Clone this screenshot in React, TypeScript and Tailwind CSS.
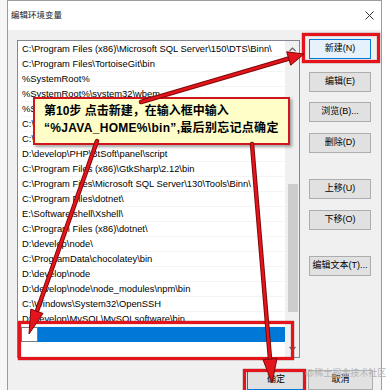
const rows = [
  "C:\\Program Files (x86)\\Microsoft SQL Server\\150\\DTS\\Binn\\",
  "C:\\Program Files\\TortoiseGit\\bin",
  "%SystemRoot%",
  "%SystemRoot%\\system32\\wbem",
  "%SystemRoot%\\System32\\WindowsPowerShell\\v1.0\\",
  "C:\\Program Files\\Git\\cmd",
  "C:\\Program Files\\nodejs\\",
  "D:\\develop\\PHP\\BtSoft\\panel\\script",
  "C:\\Program Files (x86)\\GtkSharp\\2.12\\bin",
  "C:\\Program Files\\Microsoft SQL Server\\130\\Tools\\Binn\\",
  "C:\\Program Files\\dotnet\\",
  "E:\\Software\\shell\\Xshell\\",
  "C:\\Program Files (x86)\\dotnet\\",
  "D:\\develop\\node\\",
  "C:\\ProgramData\\chocolatey\\bin",
  "D:\\develop\\node",
  "D:\\develop\\node\\node_modules\\npm\\bin",
  "C:\\Windows\\System32\\OpenSSH",
  "D:\\develop\\MySQL\\MySQLsoftware\\bin",
];

function SideButton({ label, focused, className }: { label: string; focused?: boolean; className: string }) {
  return (
    <div
      className={`flex h-[20px] w-[62px] items-center justify-center border text-[9px] ${
        focused ? "border-[#0078d7] bg-[#e5f1fb]" : "border-[#adadad] bg-[#e1e1e1]"
      } ${className}`}
    >
      {label}
    </div>
  );
}

function Arrows() {
  return (
    <svg className="pointer-events-none absolute left-0 top-0" width="387" height="390" viewBox="0 0 387 390">
      <g stroke="#7d0808" strokeWidth="4.5" strokeLinecap="round" fill="none">
        <line x1="141" y1="102" x2="289" y2="58.5" />
        <line x1="97" y1="141" x2="37" y2="311" />
        <line x1="252" y1="144" x2="270" y2="359" />
      </g>
      <g stroke="#e3141b" strokeWidth="2.6" strokeLinecap="round" fill="none">
        <line x1="141" y1="102" x2="289" y2="58.5" />
        <line x1="97" y1="141" x2="37" y2="311" />
        <line x1="252" y1="144" x2="270" y2="359" />
      </g>
      <g fill="#e3141b" stroke="#7d0808" strokeWidth="1" strokeLinejoin="round">
        <polygon points="304,54 290.7,65.2 286.7,51.8" />
        <polygon points="29,334 43,313.5 30.8,309.1" />
        <polygon points="272,383 277,358.5 263,359.7" />
      </g>
    </svg>
  );
}

export default function App() {
  return (
    <div className="relative flex h-[390px] w-[387px] overflow-hidden bg-[#f0f0f0] font-['Liberation_Sans','Noto_Sans_CJK_SC',sans-serif] text-black">
      {/* window behind */}
      <div className="w-[8px] shrink-0 border-r border-[#9c9c9c] bg-[#f6f6f6]" />

      <div className="flex w-[374px] shrink-0 flex-col border-r border-t border-[#9c9c9c]">
        {/* title bar */}
        <div className="flex h-[29px] items-center justify-between bg-white pl-[3px] pr-[7px]">
          <span className="text-[8.5px] text-[#222]">编辑环境变量</span>
          <svg width="9" height="9" viewBox="0 0 9 9" stroke="#333" strokeWidth="1">
            <line x1="0.5" y1="0.5" x2="8.5" y2="8.5" />
            <line x1="8.5" y1="0.5" x2="0.5" y2="8.5" />
          </svg>
        </div>

        {/* body */}
        <div className="flex flex-1 flex-col bg-[#f0f0f0] pl-[9px] pr-[8px] pt-[10px]">
          <div className="flex gap-[9px]">
            {/* list */}
            <div className="flex h-[318px] w-[283px] border border-[#828790] bg-white">
              <div className="flex w-[267px] flex-col pl-[3px] pt-[1px] text-[9.4px]">
                {rows.map((r) => (
                  <div key={r} className="flex h-[15px] items-center whitespace-nowrap border-b border-[#f4f4f4] pl-[1px]">
                    {r}
                  </div>
                ))}
                <div className="flex h-[15px]">
                  <div className="w-[17px] border border-[#7a7a7a] bg-white" />
                  <div className="flex-1 bg-[#0078d7]" />
                </div>
              </div>
              {/* scrollbar */}
              <div className="flex w-[14px] flex-col items-center bg-[#f0f0f0] pl-[1px]">
                <svg className="mt-[6px]" width="7" height="5" viewBox="0 0 7 5" fill="none" stroke="#606060" strokeWidth="1.1">
                  <polyline points="0.5,4 3.5,1 6.5,4" />
                </svg>
                <div className="mt-[132px] h-[128px] w-[10px] bg-[#cdcdcd]" />
                <svg className="mt-[34px]" width="7" height="5" viewBox="0 0 7 5" fill="none" stroke="#606060" strokeWidth="1.1">
                  <polyline points="0.5,1 3.5,4 6.5,1" />
                </svg>
              </div>
            </div>

            {/* buttons */}
            <div className="flex flex-col">
              <SideButton label="新建(N)" focused className="mt-[-1px]" />
              <SideButton label="编辑(E)" className="mt-[13px]" />
              <SideButton label="浏览(B)..." className="mt-[10px]" />
              <SideButton label="删除(D)" className="mt-[11px]" />
              <SideButton label="上移(U)" className="mt-[26px]" />
              <SideButton label="下移(O)" className="mt-[11px]" />
              <SideButton label="编辑文本(T)..." className="mt-[26px]" />
            </div>
          </div>

          <div className="mt-[12px] flex justify-end gap-[3px]">
            <div className="flex h-[20px] w-[58px] items-center justify-center border border-[#0078d7] bg-[#e1e1e1] text-[9px]">
              确定
            </div>
            <div className="flex h-[20px] w-[65px] items-center justify-center border border-[#adadad] bg-[#e1e1e1] text-[9px]">
              取消
            </div>
          </div>
        </div>
      </div>

      <div className="flex-1 bg-white" />

      {/* annotation callout */}
      <div className="absolute left-[33px] top-[97px] h-[48px] w-[257px] border-2 border-[#d0151b] bg-[#fffdc8] pl-[9px] pt-[4px] text-[12px] font-bold leading-[17px] shadow-[2px_2px_3px_rgba(0,0,0,0.35)]">
        <div className="whitespace-nowrap">第10步 点击新建，在输入框中输入</div>
        <div className="whitespace-nowrap tracking-[0.3px]">“%JAVA_HOME%\bin”,最后别忘记点确定</div>
      </div>

      {/* red highlight boxes */}
      <div className="absolute left-[302px] top-[33px] h-[30px] w-[78px] border-[3px] border-[#e3141b] shadow-[0_0_1px_#7a0a0a,inset_0_0_1px_#7a0a0a]" />
      <div className="absolute left-[18px] top-[321px] h-[39px] w-[276px] border-[3px] border-[#e3141b] shadow-[0_0_1px_#7a0a0a,inset_0_0_1px_#7a0a0a]" />
      <div className="absolute left-[243px] top-[369px] h-[30px] w-[63px] border-[3px] border-[#e3141b] shadow-[0_0_1px_#7a0a0a,inset_0_0_1px_#7a0a0a]" />

      <Arrows />

      <div className="absolute left-[305px] top-[367px] whitespace-nowrap text-[9px] text-[#b4b4b4]">@稀土掘金技术社区</div>
    </div>
  );
}
